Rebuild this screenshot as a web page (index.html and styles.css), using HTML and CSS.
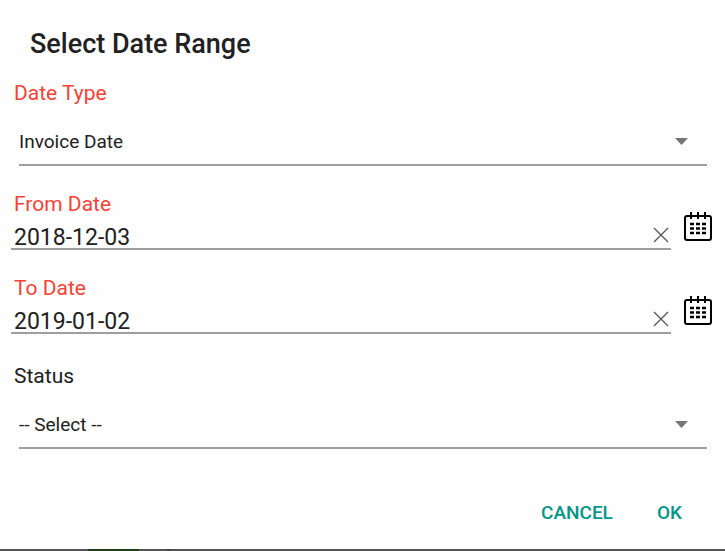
FILE: index.html
```html
<!DOCTYPE html>
<html lang="en">
<head>
<meta charset="utf-8">
<meta name="viewport" content="width=device-width, initial-scale=1">
<title>Select Date Range</title>
<link rel="stylesheet" href="styles.css">
</head>
<body>
<svg class="sprite" aria-hidden="true">
  <symbol id="calendar" viewBox="0 0 28 29">
    <rect x="1" y="4" width="26" height="24" rx="2" fill="none" stroke="currentColor" stroke-width="2"/>
    <path d="M7 0v7M14 0v7M21 0v7" stroke="currentColor" stroke-width="2"/>
    <path d="M6 12h4M12 12h4M18 12h4M6 16.5h4M12 16.5h4M18 16.5h4M6 21h4M12 21h4M18 21h4" stroke="currentColor" stroke-width="2.6"/>
  </symbol>
  <symbol id="clear" viewBox="0 0 16 16">
    <path d="M1 1l14 14M15 1L1 15" fill="none" stroke="currentColor" stroke-width="1.3"/>
  </symbol>
</svg>
<form class="dialog">
  <h1 class="title">Select Date Range</h1>

  <div class="field">
    <label class="label required" for="date-type">Date Type</label>
    <div class="dropdown">
      <select class="select" id="date-type"><option>Invoice Date</option></select>
    </div>
  </div>

  <div class="field">
    <label class="label required" for="from-date">From Date</label>
    <div class="date-row">
      <div class="date-box">
        <input class="date-input" id="from-date" type="text" value="2018-12-03">
        <button class="icon-button clear" type="button" aria-label="Clear from date"><svg><use href="#clear"/></svg></button>
      </div>
      <button class="icon-button calendar" type="button" aria-label="Pick from date"><svg><use href="#calendar"/></svg></button>
    </div>
  </div>

  <div class="field">
    <label class="label required" for="to-date">To Date</label>
    <div class="date-row">
      <div class="date-box">
        <input class="date-input" id="to-date" type="text" value="2019-01-02">
        <button class="icon-button clear" type="button" aria-label="Clear to date"><svg><use href="#clear"/></svg></button>
      </div>
      <button class="icon-button calendar" type="button" aria-label="Pick to date"><svg><use href="#calendar"/></svg></button>
    </div>
  </div>

  <div class="field field-status">
    <label class="label" for="status">Status</label>
    <div class="dropdown">
      <select class="select" id="status"><option>-- Select --</option></select>
    </div>
  </div>

  <div class="actions">
    <button class="action" type="button">CANCEL</button>
    <button class="action" type="submit">OK</button>
  </div>
</form>
<div class="backdrop"></div>
</body>
</html>
```
FILE: styles.css
```css
* {
  box-sizing: border-box;
}

body {
  margin: 0;
  min-height: 100vh;
  display: flex;
  flex-direction: column;
  background: #fefefe;
  color: #212121;
  font-family: Roboto, "Liberation Sans", sans-serif;
}

input,
select,
button {
  margin: 0;
  padding: 0;
  border: 0;
  border-radius: 0;
  background: none;
  color: inherit;
  font-family: inherit;
}

.sprite {
  display: none;
}

.dialog {
  flex: 1;
  display: flex;
  flex-direction: column;
  padding-top: 28px;
}

.title {
  margin: 0 30px 21px;
  font-size: 27px;
  line-height: 32px;
  font-weight: 500;
}

.field {
  margin-bottom: 26px;
}

.field-status {
  margin-top: 4px;
}

.label {
  display: block;
  padding-left: 14px;
  font-size: 21px;
  line-height: 24px;
}

.required {
  color: #f44336;
}

.dropdown {
  position: relative;
  margin: 12px 18px 0 19px;
  border-bottom: 2px solid #9e9e9e;
}

.dropdown::after {
  content: "";
  position: absolute;
  top: 21px;
  right: 19px;
  width: 13px;
  height: 7px;
  background: #757575;
  clip-path: polygon(0 0, 100% 0, 50% 100%);
  pointer-events: none;
}

.select {
  display: block;
  width: 100%;
  height: 47px;
  padding-top: 2px;
  appearance: none;
  font-size: 19px;
}

.date-row {
  display: flex;
  align-items: flex-end;
  gap: 13px;
  height: 34px;
  margin: 0 13px 0 11px;
}

.date-box {
  flex: 1;
  display: flex;
  align-items: center;
  height: 34px;
  padding: 10px 2px 0 3px;
  border-bottom: 2px solid #9e9e9e;
}

.date-input {
  flex: 1;
  min-width: 0;
  height: 28px;
  font-size: 23px;
}

.icon-button svg {
  display: block;
  width: 100%;
  height: 100%;
}

.clear {
  width: 16px;
  height: 16px;
  margin-bottom: 4px;
  color: #555;
}

.calendar {
  width: 28px;
  height: 29px;
  margin-bottom: 9px;
  color: #000;
}

.actions {
  display: flex;
  justify-content: flex-end;
  gap: 44px;
  margin-top: auto;
  padding: 0 43px 24px;
}

.action {
  color: #009688;
  font-size: 19px;
  line-height: 24px;
  font-weight: 500;
}

.backdrop {
  height: 2px;
  background: linear-gradient(90deg, #555253 88px, #1d4012 88px, #1d4012 139px, #555253 139px, #555253 167px, #444243 167px, #444243 171px, #555253 171px);
}
```
